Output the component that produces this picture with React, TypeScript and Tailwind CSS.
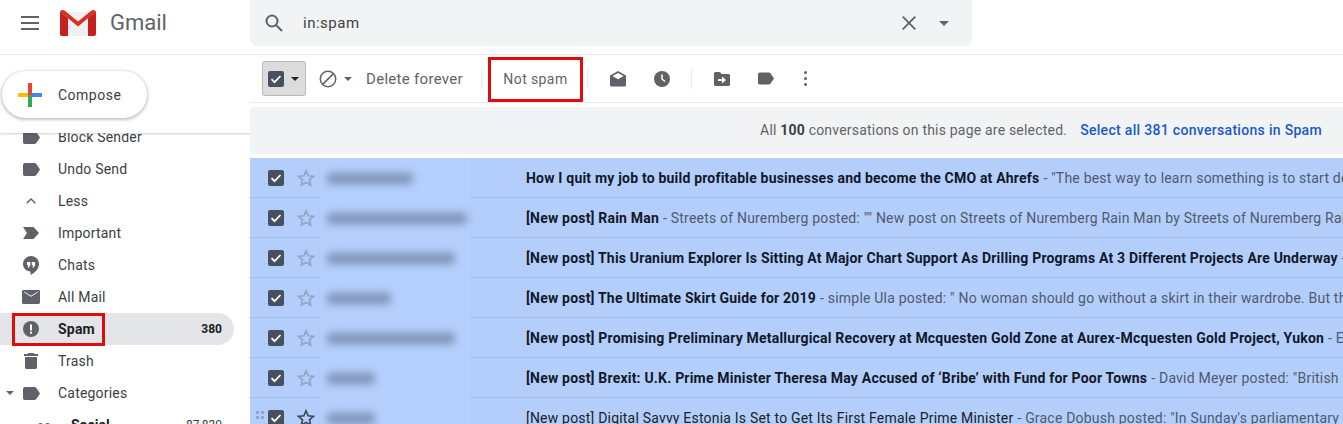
import React from 'react';

const Tag = ({ className = 'w-[17px] h-[13px]' }: { className?: string }) => (
  <svg viewBox="0 0 17 13" className={className} fill="#5f6368">
    <path d="M2 0h9.500c.7 0 1.300.3 1.700.8L17 6.500l-3.800 5.700c-.4.5-1 .8-1.700.8H2c-1.100 0-2-.9-2-2V2C0 .9.900 0 2 0z" />
  </svg>
);

const Caret = ({ color = '#5f6368', className = 'w-[10px] h-[5px]' }: { color?: string; className?: string }) => (
  <svg viewBox="0 0 10 5" className={className} fill={color}>
    <path d="M0 0h10L5 5z" />
  </svg>
);

const Star = ({ dark }: { dark?: boolean }) => (
  <svg viewBox="0 0 24 24" className="w-[20px] h-[20px]" fill="none" stroke={dark ? '#3c4858' : '#90a4c6'} strokeWidth="2">
    <path d="M12 3.500l2.600 5.900 6.400.6-4.800 4.300 1.400 6.300L12 17.300l-5.600 3.300 1.400-6.300L3 10l6.400-.6z" />
  </svg>
);

const CheckBox = () => (
  <svg viewBox="0 0 16 16" className="w-4 h-4">
    <rect width="16" height="16" rx="2" fill="#47505f" />
    <path d="M3.500 8.200l3 3 6-6.200" fill="none" stroke="#fff" strokeWidth="1.700" />
  </svg>
);

const nav = [
  { label: 'Block Sender', icon: <Tag /> },
  { label: 'Undo Send', icon: <Tag /> },
  {
    label: 'Less',
    icon: (
      <svg viewBox="0 0 10 6" className="w-[10px] h-[6px]" fill="none" stroke="#5f6368" strokeWidth="1.400">
        <path d="M.7 5.300L5 1l4.300 4.300" />
      </svg>
    ),
  },
  {
    label: 'Important',
    icon: (
      <svg viewBox="0 0 16 12" className="w-4 h-3" fill="#5f6368">
        <path d="M0 0h10.500L16 6l-5.500 6H0l4-6z" />
      </svg>
    ),
  },
  {
    label: 'Chats',
    icon: (
      <svg viewBox="0 0 16 19" className="w-4 h-[19px]" fill="#5f6368">
        <path d="M8 0a8 8 0 0 0-8 8c0 4.200 3.500 7.300 7.500 7.500V19c4.500-2.200 8.500-6 8.500-11a8 8 0 0 0-8-8z" />
        <path d="M4 6h3.300v3.300L6 11.500H4.500l1-2.200H4zM8.800 6h3.300v3.300l-1.300 2.200H9.300l1-2.200H8.800z" fill="#fff" />
      </svg>
    ),
  },
  {
    label: 'All Mail',
    icon: (
      <svg viewBox="0 0 18 14" className="w-[18px] h-[14px]" fill="#5f6368">
        <path d="M1.500 0h15c.8 0 1.500.7 1.500 1.500v11c0 .8-.7 1.500-1.500 1.500h-15C.7 14 0 13.300 0 12.500v-11C0 .7.700 0 1.500 0zM9 6.700l7-4.400V1.500L9 5.800 2 1.500v.8z" fillRule="evenodd" />
      </svg>
    ),
  },
  {
    label: 'Spam',
    count: '380',
    active: true,
    icon: (
      <svg viewBox="0 0 16 16" className="w-4 h-4">
        <circle cx="8" cy="8" r="8" fill="#5f6368" />
        <rect x="7" y="3.500" width="2" height="6" fill="#fff" />
        <rect x="7" y="10.700" width="2" height="2" fill="#fff" />
      </svg>
    ),
  },
  {
    label: 'Trash',
    icon: (
      <svg viewBox="0 0 14 16" className="w-[14px] h-4" fill="#5f6368">
        <path d="M4.500 0h5l1 1H14v2H0V1h3.500zM1 4h12v10.500c0 .8-.7 1.500-1.500 1.500h-9C1.700 16 1 15.300 1 14.500z" />
      </svg>
    ),
  },
  { label: 'Categories', icon: <Tag />, caret: true },
];

const rows = [
  {
    name: 'w-[86px]',
    subject: 'How I quit my job to build profitable businesses and become the CMO at Ahrefs',
    snippet: '"The best way to learn something is to start doing it and then see what happens along the way',
  },
  {
    name: 'w-[140px]',
    subject: '[New post] Rain Man',
    snippet: 'Streets of Nuremberg posted: "" New post on Streets of Nuremberg Rain Man by Streets of Nuremberg Rain Man is a film',
  },
  {
    name: 'w-[128px]',
    subject: '[New post] This Uranium Explorer Is Sitting At Major Chart Support As Drilling Programs At 3 Different Projects Are Underway',
    snippet: 'Energy and Gold',
  },
  {
    name: 'w-[64px]',
    subject: '[New post] The Ultimate Skirt Guide for 2019',
    snippet: 'simple Ula posted: " No woman should go without a skirt in their wardrobe. But there are so many styles',
  },
  {
    name: 'w-[128px]',
    subject: '[New post] Promising Preliminary Metallurgical Recovery at Mcquesten Gold Zone at Aurex-Mcquesten Gold Project, Yukon',
    snippet: 'Energy and Gold',
  },
  {
    name: 'w-[48px]',
    subject: '[New post] Brexit: U.K. Prime Minister Theresa May Accused of ‘Bribe’ with Fund for Poor Towns',
    snippet: 'David Meyer posted: "British Prime Minister',
  },
  {
    name: 'w-[48px]',
    subject: '[New post] Digital Savvy Estonia Is Set to Get Its First Female Prime Minister',
    snippet: 'Grace Dobush posted: "In Sunday\'s parliamentary elections in Estonia',
    read: true,
  },
];

export default function App() {
  return (
    <div className="h-[424px] w-[1343px] overflow-hidden bg-white font-['Roboto',sans-serif] text-[#3c4043]">
      {/* ヘッダー */}
      <header className="flex h-[55px] border-b border-[#e8e9ea]">
        <div className="flex w-[250px] shrink-0 items-center pb-2">
          <div className="ml-[21px] flex w-[18px] flex-col gap-[4px]">
            <span className="h-[2px] bg-[#5f6368]" />
            <span className="h-[2px] bg-[#5f6368]" />
            <span className="h-[2px] bg-[#5f6368]" />
          </div>
          <svg viewBox="0 0 36 26" className="ml-[21px] h-[26px] w-[36px]">
            <path d="M0 2h36v22a2 2 0 0 1-2 2H2a2 2 0 0 1-2-2z" fill="#f0f0f0" />
            <path d="M0 1.500C1 0 3 -.5 4.500 .5L18 11.500 31.500 .5C33 -.5 35 0 36 1.500L18 16.500z" fill="#d93025" />
            <path d="M0 1.500V24a2 2 0 0 0 2 2h6V8z" fill="#c5221f" />
            <path d="M36 1.500V24a2 2 0 0 1-2 2h-6V8z" fill="#c5221f" />
          </svg>
          <span className="ml-[14px] text-[22px] leading-none text-[#5f6368]">Gmail</span>
        </div>
        <div className="flex h-[46px] w-[722px] items-center rounded-b-lg bg-[#f1f3f4]">
          <svg viewBox="0 0 18 18" className="ml-[15px] h-[18px] w-[18px]" fill="none" stroke="#5f6368" strokeWidth="2">
            <circle cx="7" cy="7" r="5.500" />
            <path d="M11 11l6 6" />
          </svg>
          <span className="ml-[20px] flex-1 text-[15px] tracking-[0.5px] text-[#3c4043]">in:spam</span>
          <svg viewBox="0 0 14 14" className="h-[14px] w-[14px]" fill="none" stroke="#5f6368" strokeWidth="1.800">
            <path d="M.7.700l12.600 12.600M13.300.700L.7 13.300" />
          </svg>
          <span className="ml-[23px] mr-[23px] flex">
            <Caret />
          </span>
        </div>
      </header>

      <div className="flex h-[369px]">
        {/* サイドバー */}
        <aside className="w-[250px] shrink-0 overflow-hidden">
          <div className="relative z-10 h-[78px] bg-white pl-[2px] pt-[16px] shadow-[0_1px_2px_rgba(60,64,67,0.25)]">
            <div className="flex h-[47px] w-[145px] items-center rounded-full bg-white pl-[16px] shadow-[0_1px_3px_1px_rgba(60,64,67,0.3)]">
              <svg viewBox="0 0 24 24" className="h-[24px] w-[24px]">
                <rect x="10" y="0" width="4" height="12" fill="#ea4335" />
                <rect x="10" y="12" width="4" height="12" fill="#34a853" />
                <rect x="0" y="10" width="10" height="4" fill="#fbbc04" />
                <rect x="14" y="10" width="10" height="4" fill="#4285f4" />
              </svg>
              <span className="ml-[16px] text-sm tracking-[0.5px] text-[#3c4043]">Compose</span>
            </div>
          </div>
          <nav className="-mt-[12px] pr-4">
            {nav.map((item) => (
              <div
                key={item.label}
                className={`relative flex h-[32px] items-center rounded-r-full ${item.active ? 'bg-[#e3e5e8] font-bold text-[#202124]' : ''}`}
              >
                <span className="flex w-[22px] justify-start pl-[6px]">
                  {item.caret && <Caret className="h-[4px] w-[8px]" />}
                </span>
                <span className="flex w-[18px] justify-center">{item.icon}</span>
                <span className="ml-[18px] flex-1 text-sm tracking-[0.2px]">{item.label}</span>
                {item.count && <span className="mr-[12px] text-xs">{item.count}</span>}
                {item.active && (
                  <span className="absolute left-[12px] top-0 h-[33px] w-[93px] border-[3px] border-[#e00b0b]" />
                )}
              </div>
            ))}
            <div className="flex h-[32px] items-center">
              <span className="ml-[38px] flex w-[14px] flex-wrap gap-[2px]">
                <span className="h-[5px] w-[5px] rounded-full bg-[#5f6368]" />
                <span className="h-[5px] w-[5px] rounded-full bg-[#5f6368]" />
              </span>
              <span className="ml-[19px] flex-1 text-sm font-bold text-[#202124]">Social</span>
              <span className="mr-[12px] text-xs">87,830</span>
            </div>
          </nav>
        </aside>

        <main className="min-w-0 flex-1">
          {/* ツールバー */}
          <div className="flex h-[48px] items-center border-b border-[#e8e9ea]">
            <div className="ml-[12px] flex h-[35px] w-[44px] items-center gap-[7px] rounded-[3px] border border-[#b5b7ba] bg-[#dcdcdc] pl-[5px]">
              <CheckBox />
              <Caret color="#202124" className="h-[4px] w-[8px]" />
            </div>
            <svg viewBox="0 0 18 18" className="ml-[13px] h-[18px] w-[18px]" fill="none" stroke="#5f6368" strokeWidth="1.500">
              <circle cx="9" cy="9" r="7.700" />
              <path d="M3.600 14.400L14.400 3.600" />
            </svg>
            <span className="ml-[7px] flex">
              <Caret className="h-[4px] w-[8px]" />
            </span>
            <span className="ml-[14px] pt-px text-[15px] tracking-[0.3px] text-[#5f6368]">Delete forever</span>
            <span className="ml-[18px] h-[20px] w-px bg-[#e8e9ea]" />
            <div className="ml-[6px] flex h-[45px] w-[95px] items-center justify-center self-end border-[3px] border-[#e00b0b] pb-[2px] text-sm tracking-[0.4px] text-[#5f6368]">
              Not spam
            </div>
            <span className="ml-[4px] h-[20px] w-px bg-[#e8e9ea]" />
            <svg viewBox="0 0 16 16" className="ml-[22px] h-4 w-4" fill="#5f6368">
              <path d="M8 0l8 4.500V14c0 .8-.7 1.500-1.500 1.500h-13C.7 15.500 0 14.800 0 14V4.500z" />
              <path d="M2.500 5L8 1.900 13.500 5 8 8.300z" fill="#fff" />
            </svg>
            <svg viewBox="0 0 16 16" className="ml-[28px] h-4 w-4">
              <circle cx="8" cy="8" r="8" fill="#5f6368" />
              <path d="M8 3.500V8l3 2.500" fill="none" stroke="#fff" strokeWidth="1.500" />
            </svg>
            <span className="ml-[21px] h-[20px] w-px bg-[#e8e9ea]" />
            <svg viewBox="0 0 16 14" className="ml-[22px] h-[14px] w-4" fill="#5f6368">
              <path d="M1.500 0H6l1.500 2h7c.8 0 1.500.7 1.500 1.500v9c0 .8-.7 1.500-1.500 1.500h-13C.7 14 0 13.300 0 12.500v-11C0 .7.700 0 1.500 0z" />
              <path d="M4 7h4V4.500L12 8l-4 3.500V9H4z" fill="#fff" />
            </svg>
            <span className="ml-[28px] flex">
              <Tag className="h-[13px] w-[16px]" />
            </span>
            <div className="ml-[30px] flex flex-col gap-[3px]">
              <span className="h-[3px] w-[3px] rounded-full bg-[#5f6368]" />
              <span className="h-[3px] w-[3px] rounded-full bg-[#5f6368]" />
              <span className="h-[3px] w-[3px] rounded-full bg-[#5f6368]" />
            </div>
          </div>

          {/* 選択バナー */}
          <div className="mt-[4px] flex h-[47px] items-center justify-end rounded-l bg-[#f1f3f4] pb-[2px] pr-[21px] text-sm tracking-[0.2px] text-[#5f6368]">
            <span>
              All <b className="text-[#3c4043]">100</b> conversations on this page are selected.
            </span>
            <span className="ml-[13px] font-medium tracking-[0.31px] text-[#1a5ac8]">Select all 381 conversations in Spam</span>
          </div>

          {/* メール一覧 */}
          <div className="mt-[4px]">
            {rows.map((row) => (
              <div key={row.subject} className="flex h-[40px] overflow-hidden bg-[#b3cefb]">
                <div className="relative flex w-[70px] shrink-0 items-center border-b border-[#a3bce6] pl-[18px]">
                  {row.read && (
                    <span className="absolute left-[6px] top-[13px] grid grid-cols-2 gap-[2px]">
                      <span className="h-[3px] w-[3px] bg-[#8ea6cc]" />
                      <span className="h-[3px] w-[3px] bg-[#8ea6cc]" />
                      <span className="h-[3px] w-[3px] bg-[#8ea6cc]" />
                      <span className="h-[3px] w-[3px] bg-[#8ea6cc]" />
                    </span>
                  )}
                  <CheckBox />
                  <span className="ml-[12px] flex">
                    <Star dark={row.read} />
                  </span>
                </div>
                <div className="flex w-[150px] shrink-0 items-center bg-[#b5d0fc] pl-[7px]">
                  <span className={`h-[11px] ${row.name} rounded-sm bg-[#7c90b5] blur-[4px]`} />
                </div>
                <div className="flex min-w-0 flex-1 items-center overflow-hidden whitespace-nowrap border-b border-[#a3bce6] pl-[56px] text-sm tracking-[0.2px]">
                  <span className={row.read ? 'text-[#202124]' : 'font-bold text-[#111827]'}>{row.subject}</span>
                  <span className="ml-1 text-[#4f5a6d]">- {row.snippet}</span>
                </div>
              </div>
            ))}
          </div>
        </main>
      </div>
    </div>
  );
}
